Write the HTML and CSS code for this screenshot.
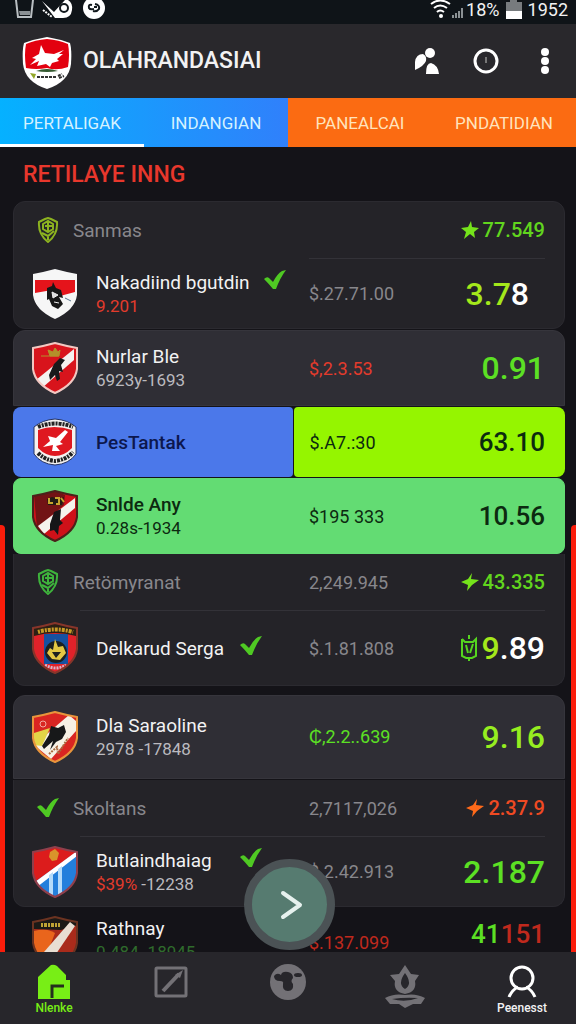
FILE: index.html
```
<!DOCTYPE html>
<html lang="id">
<head>
    <meta charset="UTF-8">
    <meta name="viewport" content="width=device-width, initial-scale=1.0">
    <title>OLAHRANDASIAI</title>
    <link rel="stylesheet" href="styles.css">
</head>
<body>
    <svg class="defs" aria-hidden="true">
        <defs>
            <clipPath id="shield"><path d="M23 1Q34 4 45 6V27Q43 42 23 51Q3 42 1 27V6Q12 4 23 1Z"/></clipPath>
            <symbol id="outline" viewBox="0 0 46 52"><path d="M23 1Q34 4 45 6V27Q43 42 23 51Q3 42 1 27V6Q12 4 23 1Z" fill="none" stroke="currentColor" stroke-width="2"/></symbol>
            <symbol id="check" viewBox="0 0 22 20"><path d="M0 9Q3 6 5 8L9 12Q13 4 18 1L22 0Q16 8 12 19H9Q5 14 0 9Z" fill="#4fc923"/></symbol>
            <symbol id="crest" viewBox="0 0 22 26"><path d="M2 5L8 2L11 1L14 2L20 5Q21 17 11 25Q1 17 2 5Z" fill="none" stroke="currentColor" stroke-width="2"/><path d="M6 7L11 4L16 7V12L11 15L6 12ZM5 16L11 19L17 14M11 4V15M8 9H15M11 19V23" fill="none" stroke="currentColor" stroke-width="2"/></symbol>
        </defs>
    </svg>

    <div class="status-bar">
        <svg width="90" height="20" viewBox="0 0 90 20">
            <path d="M1 0L3 17H16L18 0" fill="none" stroke="#b9bfc2" stroke-width="2"/>
            <path d="M4 11H15V15H5Z" fill="#8b9194"/>
            <path d="M27 1L39 12L50 0H53Q58 3 57 10Q56 18 48 18H40Z" fill="#fff"/>
            <circle cx="49" cy="8" r="4" fill="#fff" stroke="#11181c" stroke-width="2"/>
            <path d="M28 10L37 17" stroke="#fff" stroke-width="2" stroke-dasharray="2 1"/>
            <circle cx="79" cy="8" r="11" fill="#fff"/>
            <path d="M77 5Q73 4 74 8Q75 10 79 9M80 4Q85 5 84 9Q82 12 78 11M79 7H82" fill="none" stroke="#11181c" stroke-width="2"/>
        </svg>
        <div class="status-right">
            <svg width="34" height="20" viewBox="0 0 34 20">
                <path d="M1 4Q10 -3 20 4M4 8Q10 3 17 8M7 12Q10 9 14 12" fill="none" stroke="#fff" stroke-width="2"/>
                <circle cx="11" cy="16" r="2" fill="#fff"/>
                <path d="M22 18V15H24V18ZM25 18V13H27V18ZM28 18V11H30V18ZM31 18V8H33V18Z" fill="#8b9194"/>
            </svg>
            <span>18%</span>
            <svg class="battery" width="16" height="20" viewBox="0 0 16 20"><path d="M0 2H4V0H11V2H16V11H0Z" fill="#777b7e"/><path d="M0 11H16V19H0Z" fill="#fff"/></svg>
            <span>1952</span>
        </div>
    </div>

    <header class="top-bar">
        <svg class="logo" viewBox="0 0 50 54">
            <path d="M25 1Q37 3 48 7Q50 14 49 28Q47 46 25 53Q3 46 1 28Q0 14 2 7Q13 3 25 1Z" fill="#fff"/>
            <path d="M25 3Q37 4 46 8Q48 18 46 31Q35 35 25 32Q14 34 4 32Q2 18 4 8Q13 4 25 3Z" fill="#e3000f"/>
            <path d="M10 22L17 18L19 9L23 17L32 18L42 14L37 18L41 18L35 23L37 25L30 27L28 31L24 28L15 30L17 25L8 29L14 23Z" fill="#fff"/>
            <path d="M14 35Q25 31 36 35Q25 37 14 35Z" fill="#345a30"/>
            <path d="M8 37L14 38L12 43L10 40Z" fill="#92a828"/>
            <path d="M15 41H34M36 40L40 38M37 42L42 40" stroke="#333" stroke-width="2" stroke-dasharray="3 1"/>
        </svg>
        <h1>OLAHRANDASIAI</h1>
        <div class="actions">
            <button aria-label="Teman"><svg viewBox="0 0 26 28"><circle cx="16" cy="6" r="5"/><path d="M1 23V15Q2 7 9 7Q13 9 12 14Q10 19 1 23ZM12 27Q12 16 17 16Q24 18 25 27Z"/></svg></button>
            <button aria-label="Waktu"><svg viewBox="0 0 26 28"><circle cx="13" cy="14" r="11" fill="none" stroke="#fff" stroke-width="3"/><path d="M12 10H14V16H12Z" fill="#777"/></svg></button>
            <button aria-label="Menu"><svg viewBox="0 0 26 28"><circle cx="13" cy="5" r="4"/><circle cx="13" cy="14" r="4"/><circle cx="13" cy="23" r="4"/></svg></button>
        </div>
    </header>

    <nav class="tabs">
        <a href="#" class="active">PERTALIGAK</a>
        <a href="#">INDANGIAN</a>
        <a href="#" class="orange">PANEALCAI</a>
        <a href="#" class="orange">PNDATIDIAN</a>
    </nav>

    <main class="content">
        <div class="edge left"></div>
        <div class="edge right"></div>
        <h2>RETILAYE INNG</h2>

        <section class="card">
            <div class="card-head">
                <svg class="crest lime"><use href="#crest"/></svg>
                <span class="league">Sanmas</span>
                <span class="mid"></span>
                <span class="score"><svg class="star" viewBox="0 0 18 18"><path d="M10 0L11 6L18 7L13 11L14 17L9 13L3 18L5 11L0 7L7 6Z"/></svg>77.549</span>
            </div>
            <hr class="short">
            <div class="row tall">
                <svg class="badge" viewBox="0 0 46 52">
                    <g clip-path="url(#shield)">
                        <rect width="46" height="52" fill="#f6f6f6"/>
                        <path d="M3 12H43V24L28 28L20 22L3 25Z" fill="#e5141b"/>
                        <path d="M15 20L20 18L21 14L24 20L29 22L31 30L27 29L31 36L26 41L20 38L17 31L15 32Z" fill="#171717"/>
                        <path d="M20 24L26 27L21 30ZM22 34L27 35" fill="#ddd" stroke="#eee"/>
                        <path d="M33 30L39 33" stroke="#58768c"/>
                    </g>
                </svg>
                <div class="team"><div><strong>Nakadiind bgutdin</strong><small class="red">9.201</small></div><svg class="check"><use href="#check"/></svg></div>
                <span class="mid">$.27.71.00</span>
                <span class="odds pad"><b>3.7</b>8</span>
            </div>
        </section>

        <section class="card light">
            <div class="row">
                <svg class="badge" viewBox="0 0 46 52">
                    <g clip-path="url(#shield)">
                        <rect width="46" height="52" fill="#d8141c"/>
                        <path d="M4 38L42 7V18L10 46Z" fill="#f4f1ef"/>
                        <path d="M17 33L22 22L28 16L33 18L29 23L31 30L27 29L28 37L25 39L23 33L18 38Z" fill="#18191b"/>
                        <path d="M9 14H27M18 14L16 8L21 10L23 6L26 10L28 8L27 14Z" fill="#b3912a" stroke="#b3912a"/>
                    </g>
                    <use href="#outline" color="#f2c8c2"/>
                </svg>
                <div class="team"><div><strong>Nurlar Ble</strong><small>6923y-1693</small></div></div>
                <span class="mid red">$,2.3.53</span>
                <span class="odds green">0.91</span>
            </div>
        </section>

        <section class="split">
            <div class="half blue">
                <svg class="badge" viewBox="0 0 46 52">
                    <path d="M23 3Q36 4 44 11V38Q37 48 23 49Q9 48 2 38V11Q10 4 23 3Z" fill="#f5f2f0" stroke="#273462"/>
                    <path d="M6 14Q22 8 40 14V32Q32 40 23 40Q14 40 6 32Z" fill="#df1820"/>
                    <path d="M6 11Q23 4 41 11" fill="none" stroke="#222" stroke-width="4" stroke-dasharray="3 1 2 1"/>
                    <path d="M6 37Q13 44 23 45Q34 44 41 36" fill="none" stroke="#222" stroke-width="4" stroke-dasharray="3 1 2 1"/>
                    <path d="M11 31L18 25L16 20L24 22L33 14L36 16L28 26L31 28L24 30L28 35H20L21 29Z" fill="#fff"/>
                </svg>
                <strong>PesTantak</strong>
            </div>
            <div class="half lime">
                <span class="mid">$.A7.:30</span>
                <span class="odds small">63.10</span>
            </div>
        </section>

        <section class="card mint">
            <div class="row">
                <svg class="badge" viewBox="0 0 46 52">
                    <g clip-path="url(#shield)">
                        <rect width="46" height="52" fill="#ce1119"/>
                        <path d="M2 5L23 1L33 5L32 15L5 38Z" fill="#721315"/>
                        <path d="M6 36L43 8V18L12 44Z" fill="#f5f2ed"/>
                        <path d="M18 34L22 22L29 19L28 30L31 33L27 36L26 45L22 40L18 41Z" fill="#151618"/>
                        <path d="M15 9L20 7L28 9L32 7L30 15H16Z" fill="#201c13"/>
                        <path d="M17 8V13H21M23 8H27V14H24M29 8L32 12" fill="none" stroke="#c6a52e" stroke-width="2"/>
                    </g>
                    <use href="#outline" color="#4b211a"/>
                </svg>
                <div class="team"><div><strong>Snlde Any</strong><small>0.28s-1934</small></div></div>
                <span class="mid">$195 333</span>
                <span class="odds small">10.56</span>
            </div>
        </section>

        <section class="card last">
            <div class="card-head">
                <svg class="crest"><use href="#crest"/></svg>
                <span class="league">Retömyranat</span>
                <span class="mid">2,249.945</span>
                <span class="score"><svg class="star" viewBox="0 0 18 18"><path d="M11 0L10 6L18 7L11 12L6 18L7 12L0 9L7 6Z"/></svg>43.335</span>
            </div>
            <hr>
            <div class="row">
                <svg class="badge" viewBox="0 0 46 52">
                    <g clip-path="url(#shield)">
                        <rect width="46" height="52" fill="#e1222a"/>
                        <path d="M12 12H36V42H12Z" fill="#1651a0"/>
                        <path d="M2 3L23 0L44 3V14Q23 8 2 14Z" fill="#2c2014"/>
                        <path d="M6 10Q23 5 41 10" fill="none" stroke="#c69b27" stroke-width="4" stroke-dasharray="2 1 3 1"/>
                        <circle cx="24" cy="30" r="11" fill="#1d2020"/>
                        <path d="M23 17L26 25L31 24L34 31L28 38L20 37L15 31L18 26L21 28ZM20 30H29L24 36Z" fill="#e3c743" fill-rule="evenodd"/>
                        <path d="M13 43Q24 49 34 43" fill="none" stroke="#d9b5cb" stroke-width="3" stroke-dasharray="2 1"/>
                    </g>
                    <use href="#outline" color="#87352a"/>
                </svg>
                <div class="team"><div><strong>Delkarud Serga</strong></div><svg class="check"><use href="#check"/></svg></div>
                <span class="mid">$.1.81.808</span>
                <span class="odds mixed"><svg class="coin" viewBox="0 0 18 28"><path d="M9 1V5M9 24V27M2 5L5 8H13L16 5V22L12 24H6L2 22V5M6 11L8 19M13 10L10 19" fill="none" stroke="#55d51f" stroke-width="2"/></svg><span><b>9</b>.89</span></span>
            </div>
        </section>

        <section class="card light gap">
            <div class="row high">
                <svg class="badge" viewBox="0 0 46 52">
                    <g clip-path="url(#shield)">
                        <rect width="46" height="52" fill="#d92522"/>
                        <path d="M2 34L37 4L44 10V20L19 48Z" fill="#f7f1e5"/>
                        <path d="M2 22L18 17L10 35L2 34Z" fill="#e3d547"/>
                        <path d="M10 35L17 24L19 15L26 17L32 14L34 21L30 28L24 31L18 39L21 30L12 38Z" fill="#171819"/>
                        <path d="M17 43L25 36L26 43L36 27" fill="none" stroke="#a9693f" stroke-width="2" stroke-dasharray="2 1"/>
                        <circle cx="11" cy="13" r="3" fill="none" stroke="#f1aaa0"/>
                    </g>
                    <use href="#outline" color="#e8953c"/>
                </svg>
                <div class="team"><div><strong>Dla Saraoline</strong><small>2978 -17848</small></div></div>
                <span class="mid green">₵,2.2..639</span>
                <span class="odds lime-text">9.16</span>
            </div>
        </section>

        <section class="card last">
            <div class="card-head">
                <svg class="check"><use href="#check"/></svg>
                <span class="league">Skoltans</span>
                <span class="mid">2,7117,026</span>
                <span class="score orange-text"><svg class="star" viewBox="0 0 18 18"><path d="M11 0L10 6L18 7L11 12L6 18L7 12L0 9L7 6Z"/></svg>2.37.9</span>
            </div>
            <hr>
            <div class="row tall">
                <svg class="badge" viewBox="0 0 46 52">
                    <g clip-path="url(#shield)">
                        <rect width="46" height="52" fill="#237fdc"/>
                        <path d="M0 0H46V5L0 38Z" fill="#dc1c1c"/>
                        <path d="M3 36L45 5V10L5 41Z" fill="#fff"/>
                        <path d="M17 29L21 26V50H17ZM26 23L30 20V48L26 50Z" fill="#b4dbfa"/>
                        <path d="M18 6L23 3L27 7L25 14L20 15L17 11Z" fill="#d9942b"/>
                    </g>
                    <use href="#outline" color="#8f3f4c"/>
                </svg>
                <div class="team"><div><strong>Butlaindhaiag</strong><small><b class="red">$39%</b> -12238</small></div><svg class="check"><use href="#check"/></svg></div>
                <span class="mid">$.2.42.913</span>
                <span class="odds green">2.187</span>
            </div>
        </section>

        <section class="card plain">
            <div class="row">
                <svg class="badge" viewBox="0 0 46 52">
                    <g clip-path="url(#shield)">
                        <rect width="46" height="52" fill="#a92b1b"/>
                        <path d="M2 15Q14 11 23 17L12 46L2 34Z" fill="#e9651c"/>
                        <path d="M0 0H46V9L29 14L2 13Z" fill="#1b1a17"/>
                        <path d="M9 9H28" stroke="#bda334" stroke-width="4" stroke-dasharray="2 1 3 1"/>
                        <path d="M12 36L38 6L43 10L24 38Z" fill="#e8ded2"/>
                    </g>
                    <use href="#outline" color="#6b3321"/>
                </svg>
                <div class="team"><div><strong>Rathnay</strong><small class="dim-green">0.484 -18945</small></div></div>
                <span class="mid dim-red">$.137.099</span>
                <span class="odds small green">41<b class="dim-red">151</b></span>
            </div>
        </section>
    </main>

    <div class="bottom-bar">
        <button class="next" aria-label="Lanjut"><svg viewBox="0 0 24 32"><path d="M3 4L20 16L3 28" fill="none" stroke="#e6f1ee" stroke-width="4" stroke-linecap="round" stroke-linejoin="round"/></svg></button>
        <a href="#" class="home"><svg viewBox="0 0 36 36"><path d="M2 13L15 1Q18 0 21 2L30 11V16H34V35H2Z" fill="#78ee16"/><path d="M16 34V22H28" fill="none" stroke="#24301d" stroke-width="3"/></svg><span>Nlenke</span></a>
        <a href="#" aria-label="Catatan"><svg viewBox="0 0 36 36"><rect x="3" y="4" width="30" height="28" rx="1" fill="none" stroke="#737176" stroke-width="3"/><path d="M10 27L26 10" fill="none" stroke="#737176" stroke-width="4"/><path d="M22 11L30 6L27 14Z" fill="#737176"/></svg></a>
        <a href="#" aria-label="Bola"><svg viewBox="0 0 36 36"><circle cx="18" cy="18" r="18" fill="#737176"/><path d="M4 12Q7 8 11 11Q12 7 18 8Q23 9 23 14Q20 17 23 20Q24 27 18 27Q12 27 13 20Q14 17 10 17Q4 17 4 12Z" fill="#27262b"/><ellipse cx="28" cy="11" rx="4" ry="2" fill="#27262b"/></svg></a>
        <a href="#" aria-label="Api"><svg class="wide" viewBox="0 0 42 44"><path d="M21 1L27 10L35 11L31 17Q33 28 21 30Q9 28 11 17L6 11L15 10ZM21 9Q13 20 21 25Q29 20 21 9Z" fill="#737176" fill-rule="evenodd"/><path d="M1 34Q10 29 21 31Q32 29 41 34L37 40H29L21 44L15 40H6ZM8 35Q21 39 34 34Q21 33 8 35Z" fill="#737176" fill-rule="evenodd"/></svg></a>
        <a href="#" class="profile"><svg viewBox="0 0 36 36"><circle cx="18" cy="14" r="11" fill="none" stroke="#fff" stroke-width="3"/><path d="M5 33Q8 26 14 23M22 23Q28 26 31 33" fill="none" stroke="#fff" stroke-width="3"/></svg><span>Peenesst</span></a>
    </div>
</body>
</html>
```
FILE: styles.css
```
* { margin: 0; padding: 0; box-sizing: border-box; font-family: Roboto, "Liberation Sans", sans-serif; }
body { display: flex; flex-direction: column; height: 100vh; overflow: hidden; background-color: #141318; color: #f2f2f3; }
button { background: none; border: none; cursor: pointer; }
a { text-decoration: none; color: inherit; }
svg { display: block; flex: none; }
.defs { position: absolute; width: 0; height: 0; }

.status-bar { display: flex; flex: none; justify-content: space-between; height: 24px; padding: 0 8px 0 15px; background-color: #0f1418; font-size: 18px; line-height: 20px; }
.status-right { display: flex; gap: 2px; }
.battery { margin: 0 4px; }

.top-bar { display: flex; flex: none; align-items: center; height: 74px; padding: 0 18px 0 22px; background-color: #29282c; }
.logo { width: 50px; height: 54px; margin-top: 4px; }
.top-bar h1 { margin-left: 11px; font-size: 23px; line-height: 28px; font-weight: 500; }
.actions { display: flex; gap: 33px; margin-left: auto; }
.actions svg { width: 26px; height: 28px; fill: #fff; }

.tabs { display: grid; flex: none; grid-template-columns: repeat(4, 1fr); height: 49px; background: linear-gradient(90deg, #05b1ff, #3080fb 50%); }
.tabs a { display: flex; align-items: center; justify-content: center; padding-top: 3px; font-size: 17px; color: #d5f2ff; border-bottom: 3px solid transparent; }
.tabs .active { border-bottom-color: #fff; }
.tabs .orange { background-color: #fb6b12; border-bottom-color: #fb6b12; color: #ffe3bd; }

.content { position: relative; flex: 1; min-height: 0; overflow: hidden; padding: 0 11px 0 13px; }
.content h2 { padding: 12px 10px 11px; font-size: 23px; line-height: 31px; font-weight: 500; color: #e8372c; }
.edge { position: absolute; top: 378px; bottom: 0; width: 5px; background-color: #fb1d0b; }
.left { left: 0; border-top-right-radius: 4px; }
.right { right: 0; border-top-left-radius: 4px; }

.card { background-color: #242328; border: 1px solid #2b2a30; border-radius: 12px; margin-bottom: 1px; }
.light { background-color: #2f2e35; border-color: #36353c; border-radius: 12px 12px 0 0; }
.mint { background-color: #63dc73; border-color: #63dc73; border-radius: 8px; color: #0c2a10; margin-bottom: 0; }
.last { border-radius: 0 0 12px 12px; border-top: none; margin-bottom: 0; }
.gap { margin-top: 9px; }
.plain { background: none; border-color: transparent; }

.row, .card-head { display: grid; grid-template-columns: 64px 213fr 96fr 140fr; align-items: center; padding: 0 19px 0 18px; }
.row { height: 74px; }
.tall { height: 69px; }
.high { height: 82px; }
.card-head { grid-template-columns: 41px 236fr 96fr 140fr; height: 56px; color: #88878c; }
.card hr { border: none; height: 1px; margin: 0 19px 0 66px; background-color: #333238; }
.card .short { margin-left: 295px; }

.badge { width: 46px; height: 52px; }
.crest, .check { width: 22px; height: 20px; margin-left: 5px; color: #3eb33c; }
.crest { height: 26px; }
.crest.lime { color: #8db320; }
.team { display: flex; align-items: flex-start; gap: 14px; min-width: 0; }
.team > div { min-width: 130px; }
.team .check { margin-left: 0; }
.team strong, .half strong { display: block; font-size: 19px; line-height: 25px; font-weight: 400; white-space: nowrap; }
.team small { display: block; font-size: 17px; line-height: 23px; color: #bbbabf; white-space: nowrap; }
.team b { font-weight: 400; }
.league { font-size: 19px; }
.mid { font-size: 18px; color: #88878c; white-space: nowrap; }
.score { display: flex; align-items: center; justify-content: flex-end; gap: 4px; font-size: 20px; font-weight: 500; color: #61d51e; fill: #75e31b; }
.star { width: 18px; height: 18px; }
.odds { justify-self: end; font-size: 32px; line-height: 40px; font-weight: 500; color: #fff; white-space: nowrap; }
.odds b { font-weight: 500; color: #a4e81b; }
.odds.small { font-size: 26px; }
.pad { padding-right: 16px; }
.mixed { display: flex; align-items: center; gap: 4px; }
.coin { width: 18px; height: 28px; }

.split { display: grid; grid-template-columns: 279fr 271fr; gap: 1px; margin-bottom: 1px; }
.half { display: flex; align-items: center; height: 70px; border-radius: 8px 4px 4px 8px; }
.blue { background-color: #4b78ea; color: #0c174e; padding-left: 19px; gap: 18px; }
.half.lime { background-color: #95f500; padding: 0 20px 0 16px; border-radius: 4px 8px 8px 4px; justify-content: space-between; }
.lime .mid, .lime .odds, .mint .mid, .mint .odds, .mint small { color: #0c2a10; }
.mint strong, .blue strong { font-weight: 500; }

.mid.red, .team .red { color: #e33b2c; }
.mid.green, .odds.green { color: #5ce024; }
.odds.lime-text { color: #96ed20; }
.score.orange-text { color: #f04a22; fill: #ff6a1a; }
.team .dim-green { color: #2f6b2c; }
.mid.dim-red, .odds .dim-red { color: #c0291d; }
.plain .row { align-items: start; padding-top: 8px; }
.plain .odds { line-height: 36px; }
.plain .mid { padding-top: 16px; }

.bottom-bar { position: relative; display: flex; flex: none; justify-content: space-between; height: 72px; padding: 12px 24px 0; background-color: #27262b; }
.bottom-bar a { display: flex; flex-direction: column; align-items: center; width: 60px; font-size: 12px; line-height: 14px; font-weight: 500; }
.bottom-bar a svg { width: 36px; height: 36px; margin-bottom: 1px; }
.bottom-bar a .wide { width: 42px; height: 44px; }
.home { color: #78ee16; }
.next { position: absolute; left: 50%; bottom: 74px; display: flex; align-items: center; justify-content: center; width: 91px; height: 91px; margin-left: -44px; border: 8px solid #4b5255; border-radius: 50%; background-color: #567b70; }
.next svg { width: 24px; height: 32px; margin-left: 4px; }
```
